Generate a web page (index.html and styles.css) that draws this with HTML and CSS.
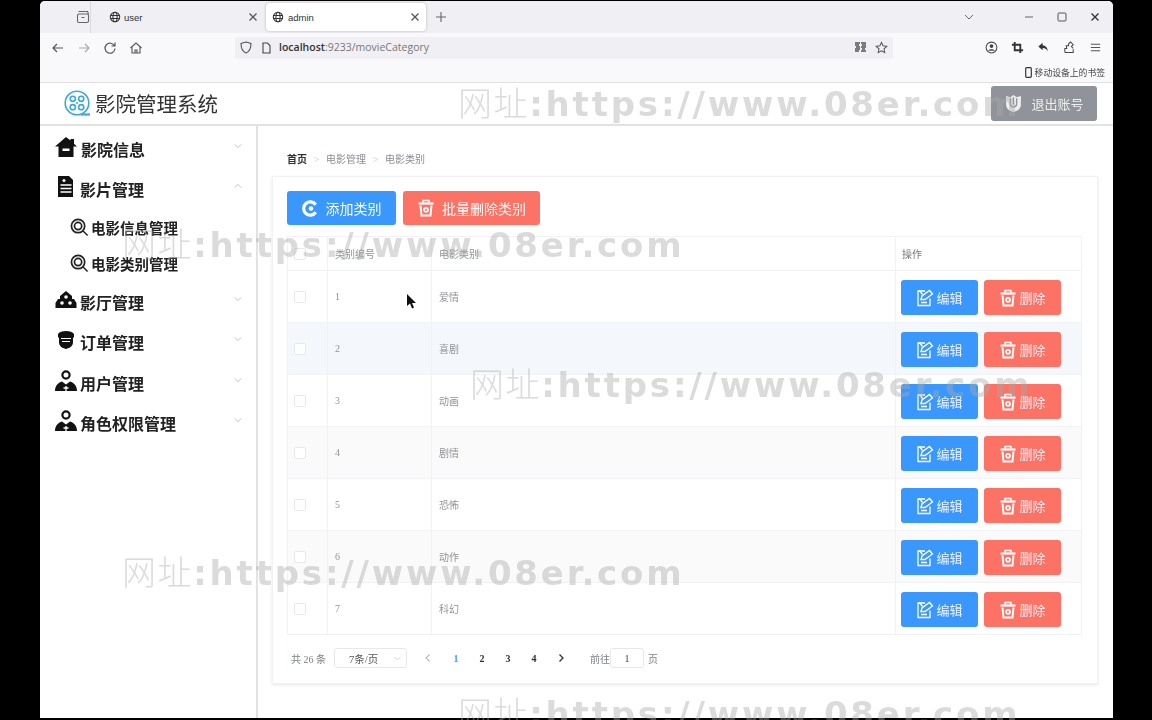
FILE: index.html
```html
<!DOCTYPE html>
<html lang="zh-CN">
<head>
  <meta charset="UTF-8">
  <title>admin</title>
  <link rel="stylesheet" href="styles.css">
</head>
<body>
  <svg class="defs" width="0" height="0">
    <symbol id="i-globe" viewBox="0 0 16 16"><g fill="none" stroke="currentColor" stroke-width="1.4"><circle cx="8" cy="8" r="6.3"/><ellipse cx="8" cy="8" rx="2.8" ry="6.3"/><path d="M2 6h12M2 10h12"/></g></symbol>
    <symbol id="i-x" viewBox="0 0 12 12"><path d="M2.5 2.5l7 7M9.5 2.5l-7 7" stroke="currentColor" stroke-width="1.3" fill="none"/></symbol>
    <symbol id="i-down" viewBox="0 0 12 12"><path d="M2 4l4 4 4-4" stroke="currentColor" stroke-width="1" fill="none"/></symbol>
    <symbol id="i-up" viewBox="0 0 12 12"><path d="M2 8l4-4 4 4" stroke="currentColor" stroke-width="1" fill="none"/></symbol>
    <symbol id="i-left" viewBox="0 0 10 10"><path d="M6.500 1.500L3 5l3.500 3.500" stroke="currentColor" stroke-width="1.100" fill="none"/></symbol>
    <symbol id="i-right" viewBox="0 0 10 10"><path d="M3.500 1.500L7 5 3.500 8.500" stroke="currentColor" stroke-width="1.300" fill="none"/></symbol>
    <symbol id="i-search" viewBox="0 0 20 20"><g fill="none" stroke="#222"><circle cx="8.5" cy="8.5" r="7" stroke-width="1.8"/><circle cx="8.5" cy="8.5" r="3.8" stroke-width="1.8"/><path d="M13.5 13.5l5 5" stroke-width="1.6"/></g></symbol>
    <symbol id="i-user" viewBox="0 0 22 22"><circle cx="11" cy="5" r="3.600" fill="none" stroke="#111" stroke-width="2.200"/><path d="M0 21c0-5 3-8.500 7-9.500l4 3 4-3c4 1 7 4.500 7 9.500z" fill="#111"/><path d="M11 16v5M8.500 18h5" stroke="#fff" stroke-width="1.300"/></symbol>
    <symbol id="i-edit" viewBox="0 0 18 18"><g fill="none" stroke="#fff" stroke-width="1.300"><path d="M14 9.500V16.500H2V2h7"/><path d="M5 10.500l1-3.500 7.500-5.500 3 3.500-7.500 5.500z"/><path d="M5 13.500h6M3.500 1.500l3 4"/></g></symbol>
    <symbol id="i-trash" viewBox="0 0 18 18"><g fill="none" stroke="#fff"><path d="M1.500 4.500h15" stroke-width="2.200"/><path d="M6 3.500V1.500h6v2" stroke-width="1.600"/><path d="M3.500 6.500l1 10h9l1-10" stroke-width="2"/><circle cx="9" cy="10.800" r="2" stroke-width="1.800"/></g></symbol>
  </svg>

  <div class="window">
    <div class="tabstrip">
      <div class="tab-side">
        <svg width="14" height="14" viewBox="0 0 14 14"><g fill="none" stroke="#666" stroke-width="1.100"><rect x="1.500" y="4" width="11" height="8.500" rx="1.500"/><path d="M2.500 1.500h9l1 2.500M5.500 7.500h3"/></g></svg>
      </div>
      <div class="tab">
        <svg class="tab-globe" width="12" height="12"><use href="#i-globe"/></svg>
        <span class="tab-name">user</span>
        <svg class="tab-x" width="12" height="12"><use href="#i-x"/></svg>
      </div>
      <div class="tab active">
        <svg class="tab-globe" width="12" height="12"><use href="#i-globe"/></svg>
        <span class="tab-name">admin</span>
        <svg class="tab-x" width="12" height="12"><use href="#i-x"/></svg>
      </div>
      <svg class="tab-plus" width="12" height="12" viewBox="0 0 12 12"><path d="M6 1v10M1 6h10" stroke="#666" stroke-width="1.100"/></svg>
      <div class="win-btns">
        <svg class="win-list" width="12" height="12"><use href="#i-down"/></svg>
        <svg width="12" height="12" viewBox="0 0 12 12"><path d="M2 6h8" stroke="#666"/></svg>
        <svg width="12" height="12" viewBox="0 0 12 12"><rect x="2" y="2" width="8" height="8" rx="1" fill="none" stroke="#555"/></svg>
        <svg width="12" height="12"><use href="#i-x"/></svg>
      </div>
    </div>

    <div class="toolbar">
      <div class="nav-btns">
        <svg width="14" height="14" viewBox="0 0 14 14"><path d="M12 7H2M6 3L2 7l4 4" fill="none" stroke="#555" stroke-width="1.200"/></svg>
        <svg width="14" height="14" viewBox="0 0 14 14"><path d="M2 7h10M8 3l4 4-4 4" fill="none" stroke="#aaa" stroke-width="1.200"/></svg>
        <svg width="14" height="14" viewBox="0 0 14 14"><path d="M11.500 5A5 5 0 1 0 12 7.500M12 1.500V5H8.500" fill="none" stroke="#555" stroke-width="1.200"/></svg>
        <svg width="14" height="14" viewBox="0 0 14 14"><path d="M1.500 7L7 2l5.500 5M3 6v6h8V6M6 12V9h2v3" fill="none" stroke="#555" stroke-width="1.100"/></svg>
      </div>
      <div class="urlbar">
        <svg width="12" height="13" viewBox="0 0 12 13"><path d="M6 1l5 1.500c0 5-1.500 8-5 9.500C2.500 10.500 1 7.500 1 2.500z" fill="none" stroke="#555" stroke-width="1.100"/></svg>
        <svg class="url-page" width="11" height="12" viewBox="0 0 11 12"><path d="M2 1h4.500L9 3.500V11H2z" fill="none" stroke="#444" stroke-width="1.100"/></svg>
        <span class="url-text"><b>localhost</b>:9233/movieCategory</span>
        <svg class="url-qr" width="11" height="11" viewBox="0 0 11 11"><path d="M0 1h5M0 3h4M1 5h4M0 7h5M0 9h4M6 1h5M7 3h4M6 5h5M7 7h3M6 9h5" stroke="#555" stroke-width="1.300"/></svg>
        <svg width="13" height="13" viewBox="0 0 14 14"><path d="M7 1.500l1.700 3.700 4 .5-3 2.700.8 4L7 10.500l-3.500 1.900.8-4-3-2.700 4-.5z" fill="none" stroke="#555" stroke-width="1.100"/></svg>
      </div>
      <div class="tool-btns">
        <svg width="13" height="13" viewBox="0 0 14 14"><circle cx="7" cy="7" r="5.800" fill="none" stroke="#444" stroke-width="1.100"/><circle cx="7" cy="5.500" r="2" fill="#444"/><path d="M3.500 10.500c1-2 6-2 7 0z" fill="#444"/></svg>
        <svg width="13" height="13" viewBox="0 0 14 14"><path d="M4 1v9h9M1 4h9v9" fill="none" stroke="#333" stroke-width="2"/></svg>
        <svg width="13" height="13" viewBox="0 0 14 14"><path d="M6 2L1.500 6 6 10V7.500c2.500 0 4.500 1 5.500 3.500 0-4-2.500-6-5.500-6.300z" fill="#333"/></svg>
        <svg width="13" height="13" viewBox="0 0 14 14"><path d="M2 12.500h9V9M2 12.500V8h2L3.500 5H6V3l2-2 3 3-2 2 2 2" fill="none" stroke="#444" stroke-width="1.100"/></svg>
        <svg width="13" height="13" viewBox="0 0 14 14"><path d="M2 3.500h10M2 7h10M2 10.500h10" stroke="#555" stroke-width="1.100"/></svg>
      </div>
    </div>

    <div class="bookmarks">
      <svg width="7" height="11" viewBox="0 0 7 11"><rect x=".7" y=".7" width="5.600" height="9.600" rx="1" fill="none" stroke="#333" stroke-width="1.200"/></svg>
      <span>移动设备上的书签</span>
    </div>

    <header class="app-header">
      <div class="brand">
        <svg width="28" height="28" viewBox="0 0 28 28"><g fill="none" stroke="#3fa7dc" stroke-width="1.600"><circle cx="14" cy="14" r="11.800"/><circle cx="9.800" cy="9.800" r="2.600"/><circle cx="18.200" cy="9.800" r="2.600"/><circle cx="9.800" cy="18.200" r="2.600"/><circle cx="18.200" cy="18.200" r="2.600"/><path d="M18 25.500h9" stroke-width="2.200"/></g><circle cx="14" cy="14" r="1" fill="#3fa7dc"/></svg>
        <span>影院管理系统</span>
      </div>
      <button class="logout">
        <svg width="19" height="19" viewBox="0 0 18 18"><path d="M2 2l4 1 3-2 3 2 4-1v8c0 4-3 6-7 7-4-1-7-3-7-7z" fill="#eee"/><path d="M6 4v6M9 3v7M12 4v6M6 10c1 3 5 3 6 0" fill="none" stroke="#909399" stroke-width="1.300"/></svg>
        退出账号
      </button>
    </header>

    <div class="body-row">
      <aside class="sidebar">
        <div class="menu-item first">
          <svg width="22" height="22" viewBox="0 0 22 22"><path d="M11 1L0 10.500h3.500V21h15V10.500H22l-3-2.800V3h-3.500v1.600z" fill="#111"/><path d="M7.500 12.500h7v2.500h-7z" fill="#fff"/></svg>
          <span>影院信息</span>
          <svg class="arrow" width="10" height="10"><use href="#i-down"/></svg>
        </div>
        <div class="menu-item">
          <svg width="22" height="22" viewBox="0 0 22 22"><path d="M3 0h11l4 4v17H3z" fill="#111"/><path d="M5.500 9h11M5.500 12.500h11M5.500 16h11" stroke="#fff" stroke-width="1.300"/><circle cx="9" cy="4.500" r="1.500" fill="#fff"/></svg>
          <span>影片管理</span>
          <svg class="arrow" width="10" height="10"><use href="#i-up"/></svg>
        </div>
        <div class="sub-item"><svg width="19" height="19"><use href="#i-search"/></svg><span>电影信息管理</span></div>
        <div class="sub-item"><svg width="19" height="19"><use href="#i-search"/></svg><span>电影类别管理</span></div>
        <div class="menu-item">
          <svg width="22" height="22" viewBox="0 0 22 22"><path d="M11 2L5 7v3H3l-2.500 4v5h21v-5L19 10h-2V7z" fill="#111"/><circle cx="7" cy="14" r="1.800" fill="#fff"/><circle cx="15" cy="14" r="1.800" fill="#fff"/><circle cx="11" cy="8" r="1.800" fill="#fff"/></svg>
          <span>影厅管理</span>
          <svg class="arrow" width="10" height="10"><use href="#i-down"/></svg>
        </div>
        <div class="menu-item">
          <svg width="22" height="22" viewBox="0 0 22 22"><path d="M3 5c2-4 14-4 16 0v3l-1 1v4c0 4-3 6-7 7-4-1-7-3-7-7V9L3 8z" fill="#111"/><path d="M6 9.500h10M7 12.500h8" stroke="#fff" stroke-width="1.200"/></svg>
          <span>订单管理</span>
          <svg class="arrow" width="10" height="10"><use href="#i-down"/></svg>
        </div>
        <div class="menu-item">
          <svg width="22" height="22"><use href="#i-user"/></svg>
          <span>用户管理</span>
          <svg class="arrow" width="10" height="10"><use href="#i-down"/></svg>
        </div>
        <div class="menu-item">
          <svg width="22" height="22"><use href="#i-user"/></svg>
          <span>角色权限管理</span>
          <svg class="arrow" width="10" height="10"><use href="#i-down"/></svg>
        </div>
      </aside>

      <main class="content">
        <div class="breadcrumb">
          <b>首页</b><i>&gt;</i><span>电影管理</span><i>&gt;</i><span>电影类别</span>
        </div>
        <section class="card">
          <div class="actions">
            <button class="btn blue add">
              <svg width="17" height="17" viewBox="0 0 18 18"><path d="M14.500 5A7 7 0 1 0 14.500 13" fill="none" stroke="#fff" stroke-width="3.400"/><circle cx="9.500" cy="9" r="2.400" fill="#fff"/></svg>
              添加类别
            </button>
            <button class="btn red batch">
              <svg width="18" height="18"><use href="#i-trash"/></svg>
              批量删除类别
            </button>
          </div>
          <table class="grid">
            <colgroup><col class="c-check"><col class="c-id"><col class="c-name"><col class="c-ops"></colgroup>
            <thead>
              <tr><th><span class="check"></span></th><th>类别编号</th><th>电影类别</th><th class="th-ops">操作</th></tr>
            </thead>
            <tbody>
              <tr>
                <td><span class="check"></span></td><td>1</td><td>爱情</td>
                <td class="ops"><button class="btn blue small"><svg width="18" height="18"><use href="#i-edit"/></svg>编辑</button><button class="btn red small"><svg width="18" height="18"><use href="#i-trash"/></svg>删除</button></td>
              </tr>
              <tr class="hover">
                <td><span class="check"></span></td><td>2</td><td>喜剧</td>
                <td class="ops"><button class="btn blue small"><svg width="18" height="18"><use href="#i-edit"/></svg>编辑</button><button class="btn red small"><svg width="18" height="18"><use href="#i-trash"/></svg>删除</button></td>
              </tr>
              <tr>
                <td><span class="check"></span></td><td>3</td><td>动画</td>
                <td class="ops"><button class="btn blue small"><svg width="18" height="18"><use href="#i-edit"/></svg>编辑</button><button class="btn red small"><svg width="18" height="18"><use href="#i-trash"/></svg>删除</button></td>
              </tr>
              <tr class="stripe">
                <td><span class="check"></span></td><td>4</td><td>剧情</td>
                <td class="ops"><button class="btn blue small"><svg width="18" height="18"><use href="#i-edit"/></svg>编辑</button><button class="btn red small"><svg width="18" height="18"><use href="#i-trash"/></svg>删除</button></td>
              </tr>
              <tr>
                <td><span class="check"></span></td><td>5</td><td>恐怖</td>
                <td class="ops"><button class="btn blue small"><svg width="18" height="18"><use href="#i-edit"/></svg>编辑</button><button class="btn red small"><svg width="18" height="18"><use href="#i-trash"/></svg>删除</button></td>
              </tr>
              <tr class="stripe">
                <td><span class="check"></span></td><td>6</td><td>动作</td>
                <td class="ops"><button class="btn blue small"><svg width="18" height="18"><use href="#i-edit"/></svg>编辑</button><button class="btn red small"><svg width="18" height="18"><use href="#i-trash"/></svg>删除</button></td>
              </tr>
              <tr>
                <td><span class="check"></span></td><td>7</td><td>科幻</td>
                <td class="ops"><button class="btn blue small"><svg width="18" height="18"><use href="#i-edit"/></svg>编辑</button><button class="btn red small"><svg width="18" height="18"><use href="#i-trash"/></svg>删除</button></td>
              </tr>
            </tbody>
          </table>
          <div class="pager">
            <span class="total">共 26 条</span>
            <div class="size-select"><span>7条/页</span><svg width="9" height="9"><use href="#i-down"/></svg></div>
            <span class="pg prev"><svg width="10" height="10"><use href="#i-left"/></svg></span>
            <span class="pg on">1</span>
            <span class="pg">2</span>
            <span class="pg">3</span>
            <span class="pg">4</span>
            <span class="pg next"><svg width="10" height="10"><use href="#i-right"/></svg></span>
            <span class="goto">前往</span>
            <div class="page-input">1</div>
            <span class="goto-end">页</span>
          </div>
        </section>
      </main>
    </div>
  </div>

  <!-- watermark and pointer lie over the capture -->
  <div class="wm wm1">网址<b>:https://www.08er.com</b></div>
  <div class="wm wm2">网址<b>:https://www.08er.com</b></div>
  <div class="wm wm3">网址<b>:https://www.08er.com</b></div>
  <div class="wm wm4">网址<b>:https://www.08er.com</b></div>
  <div class="wm wm5">网址<b>:https://www.08er.com</b></div>
  <svg class="pointer" width="11" height="17" viewBox="0 0 11 17"><path d="M1 1v12l3-2.500 2 5 2-1-2-4.500h4z" fill="#111"/></svg>
</body>
</html>
```

FILE: styles.css
```css
html, body { margin: 0; height: 720px; overflow: hidden; background: #000; }
body { position: relative; font-family: "Liberation Sans", "Noto Sans CJK SC", sans-serif; color: #303133; }
.defs { position: absolute; }
svg { display: block; flex: none; }

.window { width: 1073px; height: 717px; margin: 1px 0 0 40px; background: #fff; display: flex; flex-direction: column; overflow: hidden; border-radius: 5px 5px 0 0; filter: blur(0.45px); }

/* browser chrome */
.tabstrip { height: 32px; flex: none; background: #f0f0f4; display: flex; align-items: center; }
.tab-side { width: 51px; height: 32px; flex: none; display: flex; align-items: center; justify-content: flex-end; border-right: 1px solid #dcdce0; box-sizing: border-box; }
.tab { width: 165px; height: 28px; margin-left: 5px; padding: 0 2px 0 13px; box-sizing: border-box; display: flex; align-items: center; font-size: 9.5px; color: #333; }
.tab.active { width: 160px; padding: 0 5px 0 6px; background: #fff; border-radius: 4px; box-shadow: 0 0 3px rgba(0, 0, 0, .25); }
.tab-globe { color: #333; }
.tab-name { margin-left: 3px; flex: 1; }
.active .tab-name { margin-left: 4px; }
.tab-x { color: #555; }
.tab-plus { margin-left: 9px; }
.win-btns { margin-left: auto; display: flex; align-items: center; gap: 21px; padding-right: 12px; }
.win-list { color: #666; margin-right: 27px; }

.toolbar { height: 29px; flex: none; background: #f9f9fb; display: flex; align-items: center; }
.nav-btns { display: flex; gap: 12px; margin-left: 11px; }
.urlbar { width: 658px; height: 22px; margin-left: 92px; background: #f0f0f4; border-radius: 3px; display: flex; align-items: center; padding: 0 5px; box-sizing: border-box; }
.url-page { margin-left: 9px; }
.url-text { margin-left: 7px; padding-bottom: 2px; font-size: 10.5px; color: #777; flex: 1; font-family: "Open Sans", sans-serif; }
.url-text b { font-weight: 600; color: #333; }
.url-qr { margin-right: 9px; }
.tool-btns { display: flex; gap: 13px; margin-left: 92px; }

.bookmarks { height: 20px; flex: none; background: #f9f9fb; border-bottom: 1px solid #e0e0e2; display: flex; align-items: center; justify-content: flex-end; gap: 3px; padding-right: 8px; font-size: 8.8px; color: #444; }

/* app */
.app-header { height: 43px; flex: none; border-bottom: 2px solid #e2e2e2; box-sizing: border-box; display: flex; align-items: center; justify-content: space-between; padding: 0 16px 0 23px; }
.brand { display: flex; align-items: center; gap: 4px; font-size: 20.5px; color: #333; font-family: "Liberation Serif", "Noto Sans CJK SC", serif; margin-top: -2px; }
.logout { width: 106px; height: 35px; border: 0; border-radius: 3px; background: #909399; color: #eee; font: 13px "Noto Sans CJK SC", sans-serif; display: flex; align-items: center; justify-content: center; gap: 8px; padding: 0; }

.body-row { flex: 1; display: flex; min-height: 0; }
.sidebar { width: 218px; flex: none; border-right: 2px solid #e2e2e2; box-sizing: border-box; padding-top: 3px; font-weight: 700; }
.menu-item { height: 40px; padding: 0 13px 0 15px; display: flex; align-items: center; gap: 3px; font-size: 16px; color: #222; margin-bottom: .4px; }
.menu-item.first { gap: 4px; }
.menu-item span { flex: 1; }
.menu-item > svg:first-child { transform: translateY(-2px); }
.arrow { color: #b5b8be; transform: translateY(-3px); }
.sub-item { height: 36px; padding-left: 30px; display: flex; align-items: center; gap: 2px; font-size: 14.5px; color: #222; }

.content { flex: 1; min-width: 0; padding: 0 15px 0 14px; }
.breadcrumb { height: 50px; box-sizing: border-box; padding: 24px 0 0 15px; display: flex; align-items: flex-start; font-size: 10px; line-height: 20px; color: #8a8d93; font-family: "Liberation Serif", "Noto Sans CJK SC", serif; }
.breadcrumb b { color: #303133; }
.breadcrumb i { width: 19px; text-align: center; font-style: normal; color: #c0c4cc; }

.card { height: 508px; box-sizing: border-box; border: 1px solid #f0f2f5; box-shadow: 0 1px 3px rgba(0, 0, 0, .1); padding: 14px 14px 0; }
.actions { display: flex; gap: 7px; }
.btn { height: 35px; border: 0; border-radius: 3px; color: #fff; font: 14px "Noto Sans CJK SC", sans-serif; display: flex; align-items: center; justify-content: center; padding: 0; }
.blue { background: #3a97fc; }
.red { background: #fc7365; }
.add { width: 109px; height: 34px; gap: 7px; }
.batch { width: 137px; height: 34px; gap: 7px; }
.small { width: 77px; font-size: 13px; gap: 2px; color: #e9f3ff; }

.grid { margin-top: 11px; width: 795px; border-collapse: collapse; table-layout: fixed; font-size: 10px; color: #909399; border: 1px solid #f0f2f5; font-family: "Liberation Serif", "Noto Sans CJK SC", serif; }
.c-check { width: 40px; }
.c-id { width: 104px; }
.c-name { width: 464px; }
.grid th, .grid td { border-right: 1px solid #f0f2f5; border-bottom: 1px solid #f0f2f5; padding: 0 8px 0 7px; text-align: left; font-weight: 400; }
.grid th { height: 33px; }
.grid td { height: 51px; }
.grid th:first-child, .grid td:first-child { padding: 0 0 0 6px; }
.grid .th-ops { padding-left: 6px; color: #777; }
.grid .hover td { background: #f4f7fb; }
.grid .stripe td { background: #fafafa; }
.grid .ops { padding: 0 0 0 5px; white-space: nowrap; }
.ops .btn { display: inline-flex; vertical-align: middle; margin: 2px 6px 0 0; }
.check { display: block; width: 10px; height: 10px; border: 1px solid #e6e8ec; border-radius: 2px; background: #fff; }

.pager { margin-top: 13px; display: flex; align-items: center; height: 20px; font-size: 10px; color: #7d8087; padding-left: 4px; font-family: "Liberation Serif", "Noto Sans CJK SC", serif; }
.total { width: 43px; }
.size-select { width: 73px; height: 20px; box-sizing: border-box; border: 1px solid #e6e8ec; border-radius: 3px; display: flex; align-items: center; justify-content: space-between; padding: 0 4px 0 14px; color: #555; font-size: 10.5px; }
.size-select svg { color: #c0c4cc; }
.pg { width: 26px; font-weight: 700; color: #303133; display: flex; justify-content: center; }
.pg.prev { margin-left: 8px; color: #b5b8be; }
.pg.on { margin-left: 2px; color: #409eff; }
.pg.next { margin-left: 1px; }
.goto { margin-left: 16px; width: 20px; }
.page-input { width: 34px; height: 20px; box-sizing: border-box; border: 1px solid #e6e8ec; border-radius: 3px; text-align: center; line-height: 18px; font-size: 11px; color: #555; }
.goto-end { margin-left: 4px; }

/* overlays */
.wm { position: absolute; font-size: 34px; line-height: 40px; letter-spacing: 1.6px; color: rgba(170, 170, 170, .42); white-space: nowrap; font-family: "Noto Sans CJK SC", sans-serif; font-weight: 300; z-index: 2; }
.wm b { font-family: "DejaVu Sans", sans-serif; font-weight: 700; letter-spacing: 2.800px; }
.wm1 { left: 458px; top: 82px; }
.wm2 { left: 122px; top: 223px; }
.wm3 { left: 470px; top: 363px; }
.wm4 { left: 122px; top: 551px; }
.wm5 { left: 458px; top: 692px; }
.pointer { position: absolute; left: 406px; top: 293px; z-index: 3; }
```
